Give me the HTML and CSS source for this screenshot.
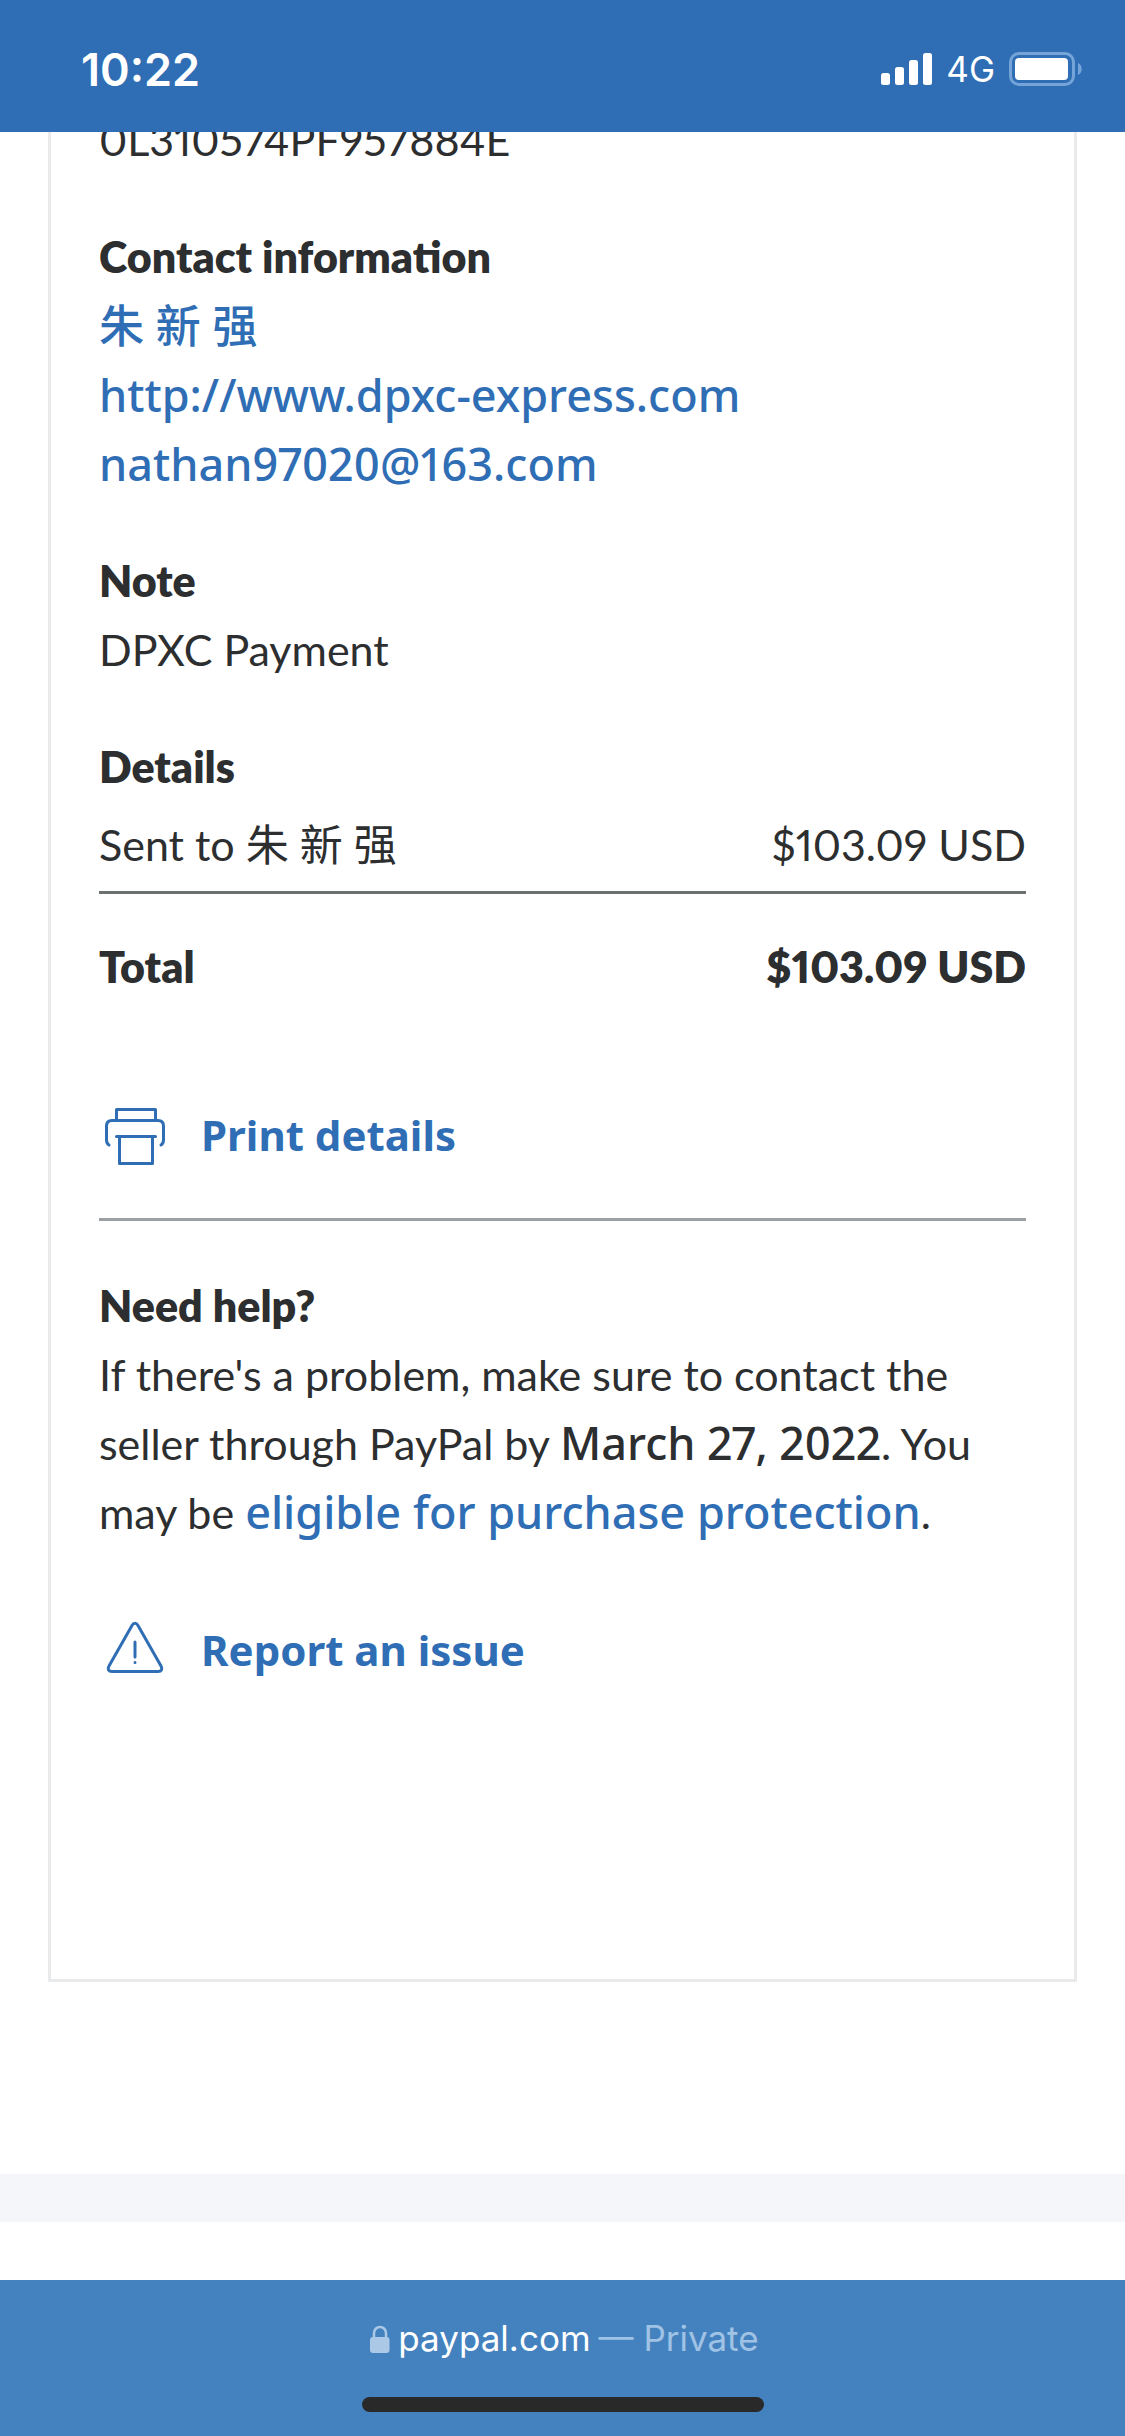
FILE: index.html
```html
<!DOCTYPE html>
<html lang="en">
<head>
    <meta charset="UTF-8">
    <meta name="viewport" content="width=device-width, initial-scale=1.0">
    <title>Transaction details</title>
    <link rel="stylesheet" href="styles.css">
</head>
<body>
    <header class="status-bar">
        <span class="time">10:22</span>
        <div class="status-icons">
            <svg class="signal" viewBox="0 0 51 32" fill="#fff">
                <rect x="0" y="20" width="9" height="12" rx="2.5"/>
                <rect x="14" y="14" width="9" height="18" rx="2.5"/>
                <rect x="28" y="7" width="9" height="25" rx="2.5"/>
                <rect x="42" y="0" width="9" height="32" rx="2.5"/>
            </svg>
            <span class="network">4G</span>
            <svg class="battery" viewBox="0 0 73 34">
                <rect x="1.5" y="1.5" width="63" height="31" rx="8.5" fill="none" stroke="#74a4d8" stroke-width="3"/>
                <rect x="6" y="6" width="53" height="22" rx="4" fill="#fff"/>
                <path d="M69 11c5 2 5 10 0 12z" fill="#74a4d8"/>
            </svg>
        </div>
    </header>

    <main class="page">
        <div class="card">
            <p class="transaction-id">0L310574PF957884E</p>

            <section class="section">
                <h2>Contact information</h2>
                <ul class="contact-list">
                    <li><a href="#">朱 新 强</a></li>
                    <li><a href="http://www.dpxc-express.com">http://www.dpxc-express.com</a></li>
                    <li><a href="mailto:nathan97020@163.com">nathan97020@163.com</a></li>
                </ul>
            </section>

            <section class="section">
                <h2>Note</h2>
                <p>DPXC Payment</p>
            </section>

            <section class="section">
                <h2>Details</h2>
                <table class="details">
                    <tbody>
                        <tr>
                            <td>Sent to 朱 新 强</td>
                            <td class="amount">$103.09 USD</td>
                        </tr>
                    </tbody>
                    <tfoot>
                        <tr>
                            <th scope="row">Total</th>
                            <td class="amount">$103.09 USD</td>
                        </tr>
                    </tfoot>
                </table>
            </section>

            <a class="action print" href="#">
                <svg class="action-icon" viewBox="0 0 72 72">
                    <path d="M17.500 21V11.500h39V21"/>
                    <path d="M10 47c-1.500-.8-2.500-2.500-2.500-5V28c0-3.500 2-5.500 5.500-5.500h46c3.500 0 5.500 2 5.500 5.500v14c0 2.500-1 4.200-2.500 5"/>
                    <path d="M17.500 38.500h39"/>
                    <path d="M20.500 39v26.500h33V39"/>
                </svg>
                <span>Print details</span>
            </a>

            <section class="help">
                <h2>Need help?</h2>
                <p>If there's a problem, make sure to contact the seller through PayPal by <strong>March 27, 2022</strong>. You may be <a href="#">eligible for purchase protection</a>.</p>
            </section>

            <a class="action report" href="#">
                <svg class="action-icon" viewBox="0 0 72 72">
                    <path d="M33 12.500L10 53c-1.800 3.200-.5 5.500 3 5.500h46c3.500 0 4.800-2.300 3-5.500L39 12.500c-1.700-3-4.300-3-6 0z"/>
                    <path d="M36 29v15M36 49.500v.1"/>
                </svg>
                <span>Report an issue</span>
            </a>
        </div>
        <div class="band"></div>
    </main>

    <footer class="address-bar">
        <div class="address">
            <svg class="lock" viewBox="0 0 20 28">
                <path d="M4 13V8a6 6 0 0 1 12 0v5" fill="none" stroke="#abc8e6" stroke-width="2.500"/>
                <rect x="0" y="12" width="19.500" height="16" rx="3" fill="#abc8e6"/>
            </svg>
            <span>paypal.com</span>
            <span class="private">— Private</span>
        </div>
        <div class="home-indicator"></div>
    </footer>
</body>
</html>
```

FILE: styles.css
```css
* {
    box-sizing: border-box;
}
body {
    margin: 0;
    min-height: 100vh;
    display: flex;
    flex-direction: column;
    background: #fff;
    color: #2c2e2f;
    font-family: Lato, "Noto Sans CJK SC", sans-serif;
    font-size: 43px;
    font-variant-numeric: proportional-nums;
    line-height: 69px;
}
h2, p, ul {
    margin: 0;
    padding: 0;
    font-size: inherit;
}
h2 {
    font-weight: 800;
}
ul {
    list-style: none;
}
a {
    color: #2f6eb5;
    text-decoration: none;
}

/* top status bar stays over the scrolled page */
.status-bar {
    position: fixed;
    top: 0;
    left: 0;
    right: 0;
    height: 132px;
    padding: 6px 43px 0 81px;
    display: flex;
    align-items: center;
    justify-content: space-between;
    background: #2f6eb5;
    color: #fff;
    font-family: Inter, sans-serif;
}
.time {
    font-size: 45px;
    font-weight: 600;
}
.status-icons {
    display: flex;
    align-items: center;
    gap: 14px;
}
.signal {
    width: 51px;
    height: 32px;
}
.network {
    font-size: 35px;
}
.battery {
    width: 73px;
    height: 34px;
}

.page {
    flex: 1;
}
.card {
    margin: 0 48px 192px;
    padding: 105px 48px 294px;
    border: 3px solid #e9eaeb;
    border-top: 0;
}
.section {
    margin-top: 48px;
}
.contact-list,
.help a,
.help strong {
    font-family: "Noto Sans", "Noto Sans CJK SC", sans-serif;
    font-size: 45px;
    font-weight: 500;
}
.help a,
.help strong {
    line-height: 60px;
}

.details {
    width: 100%;
    margin-top: 9px;
    border-collapse: collapse;
}
.details td,
.details th {
    padding: 0;
    text-align: left;
}
.details tbody td {
    padding-bottom: 12px;
    border-bottom: 3px solid #6c7071;
}
.details tfoot th,
.details tfoot td {
    padding-top: 38px;
    font-weight: 800;
}
.details .amount {
    text-align: right;
}

.action {
    display: flex;
    align-items: center;
    gap: 30px;
    font-family: "Noto Sans", sans-serif;
    font-size: 42px;
    font-weight: 700;
}
.action-icon {
    width: 72px;
    height: 72px;
    fill: none;
    stroke: #2f6eb5;
    stroke-width: 3;
    stroke-linecap: round;
    stroke-linejoin: round;
}
.print {
    margin-top: 97px;
    padding-bottom: 48px;
    border-bottom: 3px solid #9da0a2;
}
.help {
    margin-top: 50px;
}
.report {
    margin-top: 66px;
}
.band {
    height: 48px;
    background: #f5f6fa;
}

.address-bar {
    height: 156px;
    padding: 24px 0;
    display: flex;
    flex-direction: column;
    align-items: center;
    justify-content: space-between;
    background: #4482bf;
    color: #fff;
    font-family: Inter, sans-serif;
    font-size: 35px;
}
.address {
    padding-left: 4px;
    display: flex;
    align-items: center;
    gap: 8px;
}
.lock {
    width: 20px;
    height: 28px;
}
.private {
    color: #a0c2e4;
}
.home-indicator {
    width: 402px;
    height: 15px;
    border-radius: 8px;
    background: #292929;
}
```
